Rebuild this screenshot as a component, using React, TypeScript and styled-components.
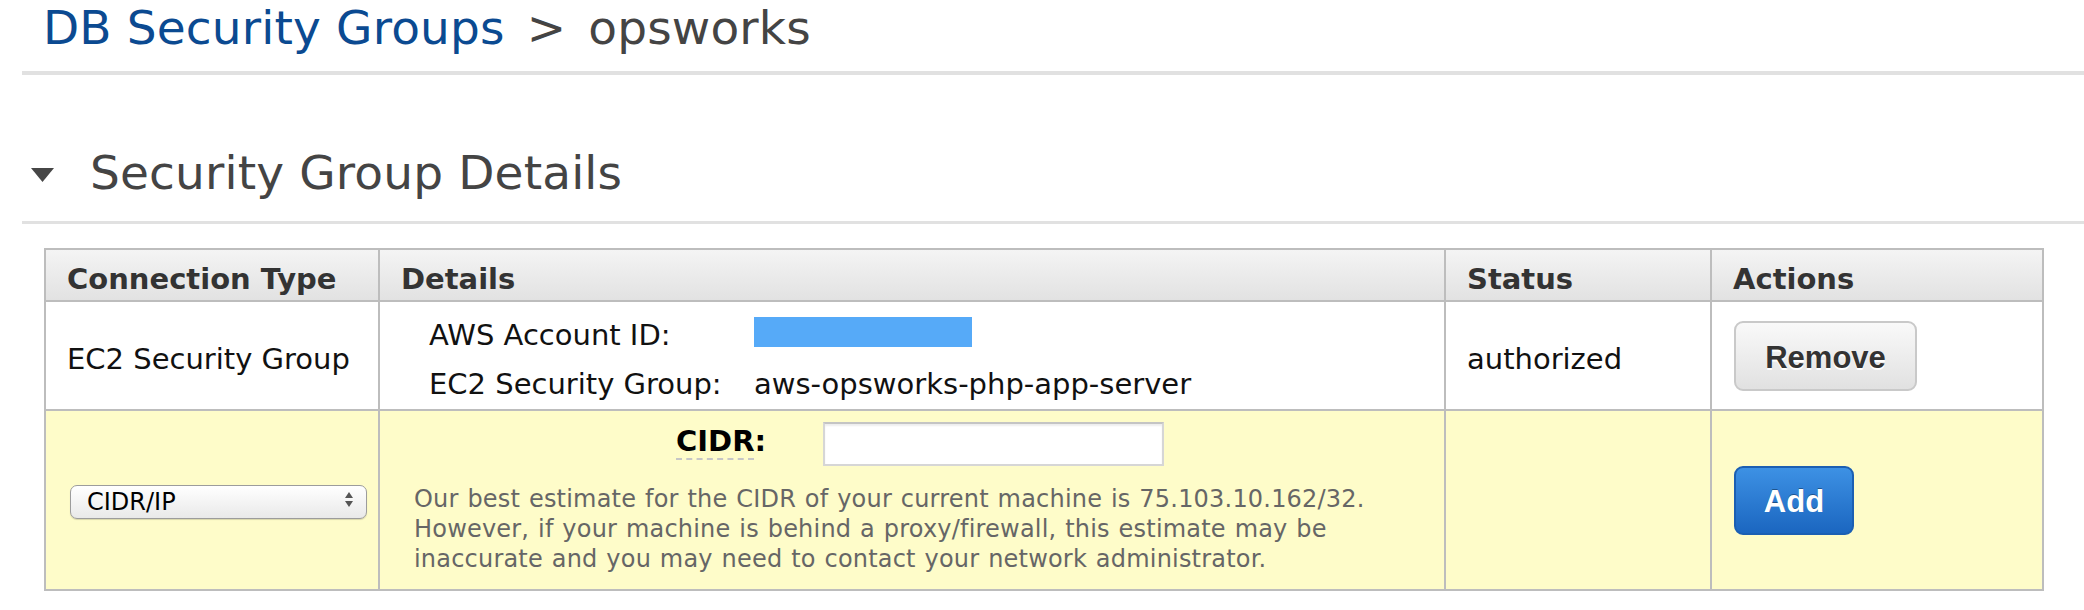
import React from "react";
import styled, { createGlobalStyle } from "styled-components";

const GlobalStyle = createGlobalStyle`
  html, body { margin: 0; padding: 0; background: #fff; }
  body { font-family: "DejaVu Sans", Verdana, sans-serif; overflow: hidden; }
  * { box-sizing: border-box; }
`;

const Page = styled.div`
  width: 2084px;
  display: flex;
  flex-direction: column;
`;

const Breadcrumb = styled.h1`
  margin: 0;
  padding-left: 43px;
  font-weight: normal;
  font-size: 47px;
  line-height: 55px;
  letter-spacing: 0.15px;
  color: #444;
  white-space: nowrap;
`;

const CrumbLink = styled.a`
  color: #0b4a91;
  text-decoration: none;
`;

const CrumbSep = styled.span`
  padding: 0 7px;
`;

const Rule = styled.hr<{ $h: number; $mt: number }>`
  margin: ${(p) => p.$mt}px 0 0 22px;
  border: 0;
  height: ${(p) => p.$h}px;
  background: #e1e1e1;
`;

const SectionHeader = styled.div`
  display: flex;
  align-items: flex-start;
  gap: 36px;
  margin-top: 75px;
  padding-left: 31px;
`;

const Caret = styled.svg`
  flex: none;
  margin-top: 18px;
`;

const SectionTitle = styled.h2`
  margin: 0;
  font-weight: normal;
  font-size: 47px;
  line-height: 46px;
  letter-spacing: 0.15px;
  color: #444;
`;

const Grid = styled.div`
  margin: 24px 0 0 44px;
  width: 2000px;
  display: grid;
  grid-template-columns: 334px 1066px 266px 332px;
  grid-template-rows: 52px 109px 180px;
  border-left: 2px solid #bdbdbd;
  border-top: 2px solid #bdbdbd;
`;

const HeadCell = styled.div`
  border-right: 2px solid #bdbdbd;
  border-bottom: 2px solid #bdbdbd;
  background: linear-gradient(#f4f4f4, #e2e2e2);
  padding: 12px 21px 0;
  font-weight: bold;
  font-size: 29px;
  line-height: 34px;
  color: #333;
  white-space: nowrap;
`;

const Cell = styled.div<{ $bg?: string; $pl?: number; $pt?: number; $top?: boolean }>`
  border-right: 2px solid #bdbdbd;
  border-bottom: 2px solid #bdbdbd;
  background: ${(p) => p.$bg ?? "#fff"};
  display: flex;
  flex-direction: column;
  justify-content: ${(p) => (p.$top ? "flex-start" : "center")};
  padding-left: ${(p) => p.$pl ?? 21}px;
  padding-top: ${(p) => p.$pt ?? 0}px;
  font-size: 29px;
  line-height: 34px;
  color: #111;
  white-space: nowrap;
`;

const DetailGrid = styled.div`
  display: grid;
  grid-template-columns: 325px auto;
  row-gap: 5px;
  font-size: 29px;
  line-height: 44px;
  color: #111;
`;

const MaskedValue = styled.div`
  width: 218px;
  height: 30px;
  margin-top: 4px;
  background: #56aaf8;
`;

const FormRow = styled.div`
  display: flex;
  align-items: flex-start;
  gap: 57px;
  padding-left: 262px;
`;

const FieldLabel = styled.label`
  margin-top: 2px;
  font-weight: bold;
  font-size: 29px;
  line-height: 34px;
  color: #000;
`;

const Abbr = styled.abbr`
  text-decoration: none;
  border-bottom: 2px dashed #c6c6c6;
`;

const TextInput = styled.input`
  width: 341px;
  height: 44px;
  border: 2px solid #d6d6d6;
  border-top-color: #c4c4c4;
  background: #fff;
  box-shadow: inset 0 2px 2px rgba(0, 0, 0, 0.07);
  font-size: 24px;
  padding: 0 8px;
  outline: none;
`;

const Hint = styled.p`
  margin: 18px 0 0;
  width: 1010px;
  white-space: normal;
  font-size: 24px;
  line-height: 30px;
  letter-spacing: 0.2px;
  word-spacing: 1px;
  color: #666;
`;

const SelectWrap = styled.div`
  position: relative;
  width: 297px;
  height: 34px;
`;

const Select = styled.select`
  appearance: none;
  -webkit-appearance: none;
  width: 100%;
  height: 100%;
  border: 1px solid #9c9c9c;
  border-radius: 7px;
  background: linear-gradient(#ffffff, #e9e9e9);
  box-shadow: 0 1px 1px rgba(0, 0, 0, 0.15);
  font-family: "DejaVu Sans", Verdana, sans-serif;
  font-size: 24px;
  color: #000;
  padding: 0 0 0 16px;
  outline: none;
`;

const SelectArrows = styled.svg`
  position: absolute;
  right: 14px;
  top: 9px;
  pointer-events: none;
`;

const Button = styled.button<{ $primary?: boolean; $w: number; $h: number }>`
  width: ${(p) => p.$w}px;
  height: ${(p) => p.$h}px;
  border-radius: 9px;
  border: 2px solid ${(p) => (p.$primary ? "#1b5fb3" : "#c9c9c9")};
  background: ${(p) =>
    p.$primary
      ? "linear-gradient(#3d91e4, #1b66c0)"
      : "linear-gradient(#f9f9f9, #e1e1e1)"};
  color: ${(p) => (p.$primary ? "#fff" : "#333")};
  text-shadow: ${(p) =>
    p.$primary ? "0 -1px 0 rgba(0,0,0,0.35)" : "0 2px 0 #fff"};
  font-family: "Liberation Sans", Arial, sans-serif;
  font-weight: bold;
  font-size: 31px;
  padding: 4px 0 0;
  cursor: pointer;
`;

const YELLOW = "#fefcc9";

export default function App() {
  return (
    <Page>
      <GlobalStyle />
      <Breadcrumb>
        <CrumbLink href="#">DB Security Groups</CrumbLink> <CrumbSep>&gt;</CrumbSep> opsworks
      </Breadcrumb>
      <Rule $h={4} $mt={16} />
      <SectionHeader>
        <Caret width="23" height="14" viewBox="0 0 23 14">
          <path d="M0 0 H23 L11.5 14 Z" fill="#464646" />
        </Caret>
        <SectionTitle>Security Group Details</SectionTitle>
      </SectionHeader>
      <Rule $h={3} $mt={25} />
      <Grid>
        <HeadCell>Connection Type</HeadCell>
        <HeadCell>Details</HeadCell>
        <HeadCell>Status</HeadCell>
        <HeadCell>Actions</HeadCell>

        <Cell $pt={7}>EC2 Security Group</Cell>
        <Cell $top $pl={49} $pt={11}>
          <DetailGrid>
            <span>AWS Account ID:</span>
            <MaskedValue />
            <span>EC2 Security Group:</span>
            <span>aws-opsworks-php-app-server</span>
          </DetailGrid>
        </Cell>
        <Cell $pt={7}>authorized</Cell>
        <Cell $pl={22}>
          <Button $w={183} $h={70}>Remove</Button>
        </Cell>

        <Cell $bg={YELLOW} $pl={24}>
          <SelectWrap>
            <Select defaultValue="cidr">
              <option value="cidr">CIDR/IP</option>
              <option value="ec2">EC2 Security Group</option>
            </Select>
            <SelectArrows width="8" height="15" viewBox="0 0 8 15">
              <path d="M0 6 L4 0 L8 6 Z M0 9 L8 9 L4 15 Z" fill="#555" />
            </SelectArrows>
          </SelectWrap>
        </Cell>
        <Cell $bg={YELLOW} $top $pl={34} $pt={11}>
          <FormRow>
            <FieldLabel>
              <Abbr title="Classless Inter-Domain Routing">CIDR</Abbr>:
            </FieldLabel>
            <TextInput type="text" />
          </FormRow>
          <Hint>
            Our best estimate for the CIDR of your current machine is 75.103.10.162/32. However, if
            your machine is behind a proxy/firewall, this estimate may be inaccurate and you may
            need to contact your network administrator.
          </Hint>
        </Cell>
        <Cell $bg={YELLOW} />
        <Cell $bg={YELLOW} $pl={22}>
          <Button $primary $w={120} $h={69}>Add</Button>
        </Cell>
      </Grid>
    </Page>
  );
}
